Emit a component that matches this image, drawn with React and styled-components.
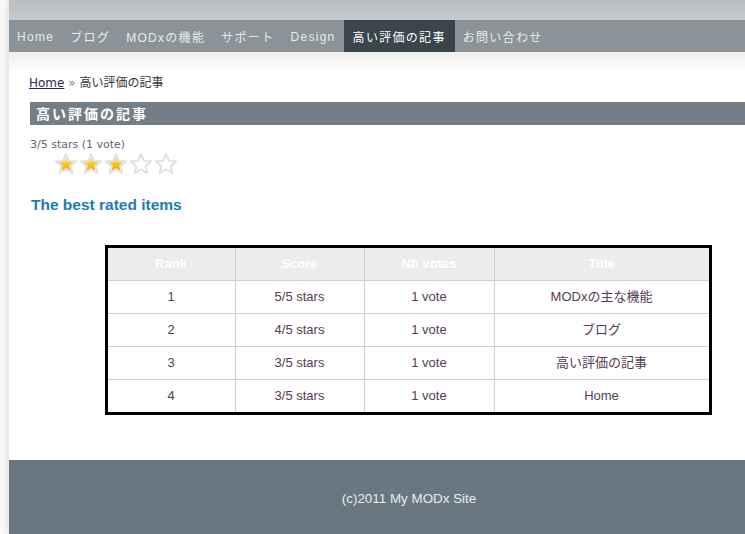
import styled, { createGlobalStyle } from 'styled-components';

const GlobalStyle = createGlobalStyle`
  html, body {
    margin: 0;
    padding: 0;
    background: #f9f9f9;
    overflow: hidden;
  }
  body {
    font-family: "DejaVu Sans", Verdana, "Noto Sans CJK JP", sans-serif;
  }
`;

const Page = styled.div`
  padding-left: 9px;
  width: 800px;
`;

const Wrapper = styled.div`
  width: 800px;
  background: #fff;
  box-shadow: -3px 0 5px rgba(0, 0, 0, 0.08);
`;

const TopBand = styled.div`
  height: 20px;
  background: linear-gradient(#b9bec3, #c6cacf);
`;

const Nav = styled.ul`
  display: flex;
  margin: 0;
  padding: 0;
  list-style: none;
  height: 32px;
  background: #8b9399;
`;

const NavItem = styled.li`
  display: flex;
  align-items: center;
  padding-top: 1px;
  font-family: "Liberation Sans", Arial, "Noto Sans CJK JP", sans-serif;
  font-size: 12px;
  letter-spacing: 1.3px;
  color: ${p => (p.$active ? '#ffffff' : '#e4eceb')};
  background: ${p => (p.$active ? '#3b454c' : 'transparent')};
  padding-left: ${p => (p.$active ? '9px' : '8px')};
  padding-right: ${p => (p.$active ? '9px' : '8px')};
`;

const Content = styled.div`
  background: linear-gradient(#f0f0f0, #ffffff 22px);
  padding: 21px 0 45px 20px;
`;

const Breadcrumb = styled.div`
  font-family: "DejaVu Sans", Verdana, "Noto Sans CJK JP", sans-serif;
  font-size: 12px;
  color: #333;
  a {
    color: #2a2a5a;
    text-decoration: underline;
  }
  span {
    color: #888;
  }
`;

const TitleBar = styled.h1`
  margin: 12px 0 0 1px;
  height: 23px;
  line-height: 23px;
  padding-left: 6px;
  background: #737e86;
  color: #fff;
  font-family: "Noto Sans CJK JP", sans-serif;
  font-weight: bold;
  font-size: 14px;
  letter-spacing: 2px;
`;

const RatingText = styled.div`
  margin-top: 13px;
  margin-left: 1px;
  font-family: "DejaVu Sans", Verdana, sans-serif;
  font-size: 11px;
  color: #666;
`;

const Stars = styled.div`
  display: flex;
  gap: 1px;
  margin: 1px 0 0 25px;
`;

const SectionTitle = styled.h2`
  margin: 20px 0 0 2px;
  font-family: "Liberation Sans", Arial, sans-serif;
  font-size: 15.5px;
  font-weight: bold;
  color: #1a7bb5;
`;

const TableWrap = styled.div`
  width: 758px;
  display: flex;
  justify-content: center;
  margin-top: 31px;
`;

const Table = styled.table`
  width: 604px;
  table-layout: fixed;
  border: 3px solid #000;
  border-collapse: collapse;
  font-family: "Liberation Sans", Arial, "Noto Sans CJK JP", sans-serif;
  font-size: 13px;
  line-height: 16px;
  color: #553c55;
`;

const Th = styled.th`
  height: 32px;
  padding: 0;
  background: #ececec;
  color: #fff;
  font-weight: bold;
  border: 1px solid #cfcfcf;
  border-top: none;
  width: ${p => p.$w};
`;

const Td = styled.td`
  height: 32px;
  padding: 0;
  text-align: center;
  border: 1px solid #cfcfcf;
`;

const Footer = styled.footer`
  height: 74px;
  padding-top: 2px;
  box-sizing: border-box;
  background: #6b7780;
  display: flex;
  align-items: center;
  justify-content: center;
  font-family: "Liberation Sans", Arial, sans-serif;
  font-size: 13.4px;
  color: #e6ecec;
`;

const Star = ({ filled }) => (
  <svg width="24" height="24" viewBox="0 0 24 24">
    <defs>
      <linearGradient id="gold" x1="0" y1="0" x2="0" y2="1">
        <stop offset="0" stopColor="#ffe680" />
        <stop offset="0.6" stopColor="#f6c21c" />
        <stop offset="1" stopColor="#e9a90c" />
      </linearGradient>
    </defs>
    <path
      d="M12 1.8 L15 8.6 L22.4 9.2 L16.8 14.1 L18.5 21.4 L12 17.5 L5.5 21.4 L7.2 14.1 L1.6 9.2 L9 8.6 Z"
      fill="#f2f2f2"
      stroke="#dcdcdc"
      strokeWidth="1.4"
      strokeLinejoin="round"
    />
    <path
      d="M12 5 L14 9.8 L19.2 10.2 L15.2 13.6 L16.4 18.6 L12 16 L7.6 18.6 L8.8 13.6 L4.8 10.2 L10 9.8 Z"
      fill={filled ? 'url(#gold)' : '#ffffff'}
    />
  </svg>
);

const navItems = ['Home', 'ブログ', 'MODxの機能', 'サポート', 'Design', '高い評価の記事', 'お問い合わせ'];

const rows = [
  ['1', '5/5 stars', '1 vote', 'MODxの主な機能'],
  ['2', '4/5 stars', '1 vote', 'ブログ'],
  ['3', '3/5 stars', '1 vote', '高い評価の記事'],
  ['4', '3/5 stars', '1 vote', 'Home'],
];

export default function App() {
  return (
    <Page>
      <GlobalStyle />
      <Wrapper>
        <TopBand />
        <Nav>
          {navItems.map(item => (
            <NavItem key={item} $active={item === '高い評価の記事'}>
              {item}
            </NavItem>
          ))}
        </Nav>
        <Content>
          <Breadcrumb>
            <a>Home</a> <span>»</span> 高い評価の記事
          </Breadcrumb>
          <TitleBar>高い評価の記事</TitleBar>
          <RatingText>3/5 stars (1 vote)</RatingText>
          <Stars>
            {[1, 2, 3, 4, 5].map(n => (
              <Star key={n} filled={n <= 3} />
            ))}
          </Stars>
          <SectionTitle>The best rated items</SectionTitle>
          <TableWrap>
            <Table>
              <thead>
                <tr>
                  <Th $w="127px">Rank</Th>
                  <Th $w="128px">Score</Th>
                  <Th $w="129px">Nb votes</Th>
                  <Th $w="214px">Title</Th>
                </tr>
              </thead>
              <tbody>
                {rows.map(r => (
                  <tr key={r[0]}>
                    {r.map((c, i) => (
                      <Td key={i}>{c}</Td>
                    ))}
                  </tr>
                ))}
              </tbody>
            </Table>
          </TableWrap>
        </Content>
        <Footer>(c)2011 My MODx Site</Footer>
      </Wrapper>
    </Page>
  );
}
